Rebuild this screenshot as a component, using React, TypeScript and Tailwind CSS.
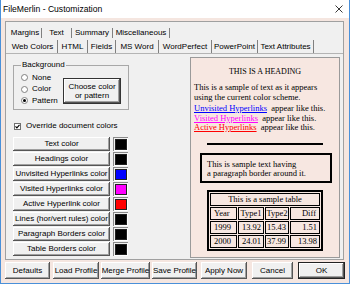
import React from 'react';

const btn3d =
  'flex items-center justify-center bg-[#f0f0f0] shadow-[inset_-1px_-1px_0_#555555,inset_1px_1px_0_#ffffff,inset_-2px_-2px_0_#a0a0a0]';

const row1 = [
  { label: 'Margins', w: 'w-[33px]' },
  { label: 'Text', w: 'w-[30px]' },
  { label: 'Summary', w: 'w-[41px]' },
  { label: 'Miscellaneous', w: 'w-[57px]' },
];

const row2 = [
  { label: 'Web Colors', w: 'w-[50px]' },
  { label: 'HTML', w: 'w-[30px]' },
  { label: 'Fields', w: 'w-[28px]' },
  { label: 'MS Word', w: 'w-[43px]' },
  { label: 'WordPerfect', w: 'w-[53px]' },
  { label: 'PowerPoint', w: 'w-[46px]' },
  { label: 'Text Attributes', w: 'w-[56px]' },
];

const colorRows = [
  { label: 'Text color', color: 'bg-black' },
  { label: 'Headings color', color: 'bg-black' },
  { label: 'Unvisited Hyperlinks color', color: 'bg-[#0000ff]' },
  { label: 'Visited Hyperlinks color', color: 'bg-[#ff00ff]' },
  { label: 'Active Hyperlink color', color: 'bg-[#ff0000]' },
  { label: 'Lines (hor/vert rules) color', color: 'bg-black' },
  { label: 'Paragraph Borders color', color: 'bg-black' },
  { label: 'Table Borders color', color: 'bg-black' },
];

const bottomButtons = [
  { label: 'Defaults', cls: 'ml-[4px] w-[45px]' },
  { label: 'Load Profile', cls: 'ml-[3px] w-[46px]' },
  { label: 'Merge Profile', cls: 'ml-[2px] w-[49px]' },
  { label: 'Save Profile', cls: 'ml-[2px] w-[45px]' },
  { label: 'Apply Now', cls: 'ml-[4px] w-[46px]' },
  { label: 'Cancel', cls: 'ml-[5px] w-[41px]' },
];

function Radio({ label, checked }: { label: string; checked?: boolean }) {
  return (
    <div className="flex h-[11.5px] items-center">
      <span className="flex h-[7px] w-[7px] items-center justify-center rounded-full border border-[#808080] bg-white">
        {checked && <span className="h-[3px] w-[3px] rounded-full bg-black" />}
      </span>
      <span className="ml-[4px]">{label}</span>
    </div>
  );
}

export default function App() {
  return (
    <div className="flex h-[284px] w-[350px] flex-col border-x border-b border-[#4a90d9] font-['Liberation_Sans',Arial,sans-serif] text-[8px] leading-[10px] text-black">
      {/* title bar */}
      <div className="flex h-[18px] items-center justify-between bg-white pl-[2px] pr-[6px]">
        <span className="text-[8.6px]">FileMerlin - Customization</span>
        <svg width="8" height="8" viewBox="0 0 8 8">
          <path d="M0.5 0.5L7.5 7.5M7.5 0.5L0.5 7.5" stroke="#222" strokeWidth="0.9" />
        </svg>
      </div>

      {/* dialog body */}
      <div className="flex flex-1 flex-col bg-[#f5e6e0] pt-[3px]">
        <div className="ml-[4px] flex h-[239px] w-[339px] flex-col border border-[#a0a0a0] bg-[#f0f0f0]">
          {/* tab rows */}
          <div className="mt-[6px] flex h-[10px] pl-[3px]">
            {row1.map((t) => (
              <div key={t.label} className={`${t.w} flex items-center justify-center border-r border-[#808080]`}>
                {t.label}
              </div>
            ))}
          </div>
          <div className="mt-[2px] flex h-[13px] pl-[2px]">
            {row2.map((t) => (
              <div key={t.label} className={`${t.w} flex items-center justify-center border-r border-[#808080]`}>
                {t.label}
              </div>
            ))}
          </div>

          {/* tab page */}
          <div className="flex flex-1 items-start justify-between border-t border-[#b4b4b4] pl-[7px] pr-[3px]">
            {/* left column */}
            <div className="mt-[6px] flex w-[116px] flex-col">
              <fieldset className="m-0 h-[50px] w-[115px] border border-[#a8a8a8] px-[7px] py-0">
                <legend className="px-[1px] leading-[10px]">Background</legend>
                <div className="flex items-start">
                  <div className="mt-[2px] flex w-[40px] flex-col">
                    <Radio label="None" />
                    <Radio label="Color" />
                    <Radio label="Pattern" checked />
                  </div>
                  <div className={`${btn3d} mt-[8px] ml-[2px] h-[26px] w-[58px] flex-col border border-[#333333] text-center leading-[9px]`}>
                    <span>Choose color</span>
                    <span>or pattern</span>
                  </div>
                </div>
              </fieldset>

              <div className="mt-[11px] flex h-[10px] items-center pl-[1px]">
                <span className="flex h-[7px] w-[7px] items-center justify-center border border-[#707070] bg-white">
                  <svg width="5" height="5" viewBox="0 0 5 5">
                    <path d="M0.5 2.4L1.9 3.9L4.5 0.8" stroke="#000" strokeWidth="1.1" fill="none" />
                  </svg>
                </span>
                <span className="ml-[5px]">Override document colors</span>
              </div>

              <div className="mt-[6px] flex flex-col gap-[1px]">
                {colorRows.map((r) => (
                  <div key={r.label} className="flex h-[14px] items-center">
                    <div className={`${btn3d} h-[14px] w-[97px]`}>{r.label}</div>
                    <div className="ml-[3px] flex h-[14px] w-[15px] items-center justify-center shadow-[inset_1px_1px_0_#8a8a8a,inset_-1px_-1px_0_#ffffff]">
                      <div className={`${r.color} h-[11px] w-[12px] border border-[#202020]`} />
                    </div>
                  </div>
                ))}
              </div>
            </div>

            {/* preview panel */}
            <div className="mt-[3px] flex h-[201px] w-[150px] flex-col border border-[#9a9a9a] bg-[#f7e7e1] font-['Liberation_Serif','Times_New_Roman',serif] text-[8.5px]">
              <div className="mt-[9px] text-center text-[8px] leading-[10px]">THIS IS A HEADING</div>
              <p className="mt-[6px] px-[3px] leading-[9.5px]">
                This is a sample of text as it appears
                <br />
                using the current color scheme.
              </p>
              <div className="mt-[2px] px-[3px] leading-[9.5px]">
                <div>
                  <span className="text-[#0000ff] underline">Unvisited Hyperlinks</span>
                  {'\u00a0\u00a0'}appear like this.
                </div>
                <div>
                  <span className="text-[#ff00ff] underline">Visited Hyperlinks</span>
                  {'\u00a0\u00a0'}appear like this.
                </div>
                <div>
                  <span className="text-[#ff0000] underline">Active Hyperlinks</span>
                  {'\u00a0\u00a0'}appear like this.
                </div>
              </div>
              <div className="mt-[10px] ml-[16px] h-[2px] w-[116px] bg-black" />
              <div className="mt-[8px] ml-[9px] h-[30px] w-[132px] border-2 border-black pl-[5px] pt-[5px] leading-[9px]">
                This is sample text having
                <br />
                a paragraph border around it.
              </div>
              <table className="mt-[7px] ml-[16px] w-[116px] border-separate border-spacing-[1px] border-2 border-black text-[8.5px] leading-[11px]">
                <tbody>
                  <tr>
                    <td colSpan={4} className="border border-black text-center">
                      This is a sample table
                    </td>
                  </tr>
                  <tr>
                    <td className="w-[27px] border border-black pl-[3px]">Year</td>
                    <td className="w-[26px] border border-black text-center">Type1</td>
                    <td className="w-[24px] border border-black text-center">Type2</td>
                    <td className="border border-black pr-[3px] text-right">Diff</td>
                  </tr>
                  <tr>
                    <td className="border border-black pl-[3px]">1999</td>
                    <td className="border border-black pr-[2px] text-right">13.92</td>
                    <td className="border border-black pr-[2px] text-right">15.43</td>
                    <td className="border border-black pr-[2px] text-right">1.51</td>
                  </tr>
                  <tr>
                    <td className="border border-black pl-[3px]">2000</td>
                    <td className="border border-black pr-[2px] text-right">24.01</td>
                    <td className="border border-black pr-[2px] text-right">37.99</td>
                    <td className="border border-black pr-[2px] text-right">13.98</td>
                  </tr>
                </tbody>
              </table>
            </div>
          </div>
        </div>

        {/* bottom buttons */}
        <div className="mt-[2px] flex h-[17px]">
          {bottomButtons.map((b) => (
            <div key={b.label} className={`${btn3d} ${b.cls} h-[17px]`}>
              {b.label}
            </div>
          ))}
          <div className={`${btn3d} ml-[5px] h-[17px] w-[47px] border border-[#222222]`}>OK</div>
        </div>
      </div>
    </div>
  );
}
